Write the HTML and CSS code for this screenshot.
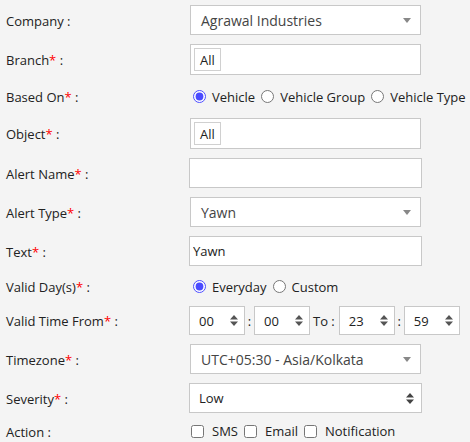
FILE: index.html
```html
<!DOCTYPE html>
<html lang="en">
<head>
    <meta charset="UTF-8">
    <title>Add Alert</title>
    <link rel="stylesheet" href="styles.css">
</head>
<body>
    <form id="alert-form">
        <div class="row">
            <label class="lbl">Company :</label>
            <div class="chosen">
                <span>Agrawal Industries</span>
                <svg class="caret" width="8" height="5" viewBox="0 0 8 5"><path d="M0 0H8L4 5Z" fill="#888"/></svg>
            </div>
        </div>

        <div class="row">
            <label class="lbl">Branch<b>*</b> :</label>
            <div class="multi"><span class="tag">All</span></div>
        </div>

        <div class="row short">
            <label class="lbl">Based On<b>*</b> :</label>
            <div class="choices">
                <label><input type="radio" name="based" checked> Vehicle</label>
                <label><input type="radio" name="based"> Vehicle Group</label>
                <label><input type="radio" name="based"> Vehicle Type</label>
            </div>
        </div>

        <div class="row">
            <label class="lbl">Object<b>*</b> :</label>
            <div class="multi"><span class="tag">All</span></div>
        </div>

        <div class="row">
            <label class="lbl">Alert Name<b>*</b> :</label>
            <input class="text-input" type="text" value="">
        </div>

        <div class="row">
            <label class="lbl">Alert Type<b>*</b> :</label>
            <div class="chosen">
                <span>Yawn</span>
                <svg class="caret" width="8" height="5" viewBox="0 0 8 5"><path d="M0 0H8L4 5Z" fill="#888"/></svg>
            </div>
        </div>

        <div class="row">
            <label class="lbl">Text<b>*</b> :</label>
            <input class="text-input" type="text" value="Yawn">
        </div>

        <div class="row short days">
            <label class="lbl">Valid Day(s)<b>*</b> :</label>
            <div class="choices">
                <label><input type="radio" name="days" checked> Everyday</label>
                <label><input type="radio" name="days"> Custom</label>
            </div>
        </div>

        <div class="row">
            <label class="lbl">Valid Time From<b>*</b> :</label>
            <div class="time-range">
                <div class="spin"><span>00</span><svg width="8" height="11" viewBox="0 0 8 11"><path d="M0 4.5L4 0L8 4.5ZM0 6.5H8L4 11Z" fill="#555"/></svg></div>
                <span class="sep">:</span>
                <div class="spin"><span>00</span><svg width="8" height="11" viewBox="0 0 8 11"><path d="M0 4.5L4 0L8 4.5ZM0 6.5H8L4 11Z" fill="#555"/></svg></div>
                <span class="to">To :</span>
                <div class="spin"><span>23</span><svg width="8" height="11" viewBox="0 0 8 11"><path d="M0 4.5L4 0L8 4.5ZM0 6.5H8L4 11Z" fill="#555"/></svg></div>
                <span class="sep">:</span>
                <div class="spin"><span>59</span><svg width="8" height="11" viewBox="0 0 8 11"><path d="M0 4.5L4 0L8 4.5ZM0 6.5H8L4 11Z" fill="#555"/></svg></div>
            </div>
        </div>

        <div class="row">
            <label class="lbl">Timezone<b>*</b> :</label>
            <div class="chosen">
                <span>UTC+05:30 - Asia/Kolkata</span>
                <svg class="caret" width="8" height="5" viewBox="0 0 8 5"><path d="M0 0H8L4 5Z" fill="#888"/></svg>
            </div>
        </div>

        <div class="row">
            <label class="lbl">Severity<b>*</b> :</label>
            <div class="native-select">
                <span>Low</span>
                <svg width="8" height="11" viewBox="0 0 8 11"><path d="M0 4.5L4 0L8 4.5ZM0 6.5H8L4 11Z" fill="#444"/></svg>
            </div>
        </div>

        <div class="row short action">
            <label class="lbl">Action :</label>
            <div class="choices">
                <label><input type="checkbox"> SMS</label>
                <label><input type="checkbox"> Email</label>
                <label><input type="checkbox"> Notification</label>
            </div>
        </div>
    </form>
</body>
</html>
```

FILE: styles.css
```css
body {
    margin: 0;
    background-color: #f4f4f4;
    font-family: 'Open Sans', 'Liberation Sans', sans-serif;
    font-size: 13px;
    color: #222;
}

#alert-form {
    padding: 5px 0 0 6px;
}

.row {
    display: flex;
    align-items: center;
    margin-bottom: 9px;
}

.row.short { height: 25px; }
.row.days { height: 23px; margin-bottom: 8px; }
.row.action { height: 18px; margin-bottom: 0; }

.lbl {
    width: 183px;
    flex-shrink: 0;
    padding-top: 1px;
}

.lbl b {
    color: #f00;
    font-weight: normal;
}

/* chosen style dropdown */
.chosen {
    box-sizing: border-box;
    width: 231px;
    height: 30px;
    margin-left: 1px;
    padding: 0 9px 0 10px;
    background: #fff;
    border: 1px solid #c8c8c8;
    display: flex;
    align-items: center;
    justify-content: space-between;
    font-size: 14px;
    color: #444;
}

.chosen .caret { margin-top: 1px; }

/* multiselect with tags */
.multi {
    box-sizing: border-box;
    width: 231px;
    height: 31px;
    margin-left: 1px;
    padding: 3px;
    background: #fff;
    border: 1px solid #c8c8c8;
    display: flex;
    align-items: center;
}

.tag {
    box-sizing: border-box;
    height: 23px;
    padding: 0 5px;
    border: 1px solid #d0d0d0;
    display: flex;
    align-items: center;
    color: #222;
}

.text-input {
    box-sizing: border-box;
    width: 233px;
    height: 30px;
    margin: 0;
    padding: 0 3px;
    border: 1px solid #c8c8c8;
    background: #fff;
    font-family: inherit;
    font-size: 13px;
    color: #222;
    outline: none;
}

.choices {
    display: flex;
    align-items: center;
    white-space: nowrap;
}

.choices label {
    display: flex;
    align-items: center;
    margin-right: 2px;
}

.choices input[type="radio"] {
    width: 13px;
    height: 13px;
    margin: 0 6px 0 4px;
    accent-color: #4b4bff;
}

.choices input[type="checkbox"] {
    width: 13px;
    height: 13px;
    margin: 0 8px 0 2px;
}

.action .choices label { margin-right: 4px; }

/* time selects */
.time-range {
    display: flex;
    align-items: center;
}

.spin,
.native-select {
    box-sizing: border-box;
    height: 29px;
    width: 56px;
    padding: 0 6px 0 9px;
    background: #fff;
    border: 1px solid #c8c8c8;
    display: flex;
    align-items: center;
    justify-content: space-between;
}

.sep {
    width: 9px;
    text-align: center;
}

.to {
    padding: 0 4px 0 3px;
}

.native-select {
    width: 233px;
    height: 30px;
    padding-right: 7px;
}
```
